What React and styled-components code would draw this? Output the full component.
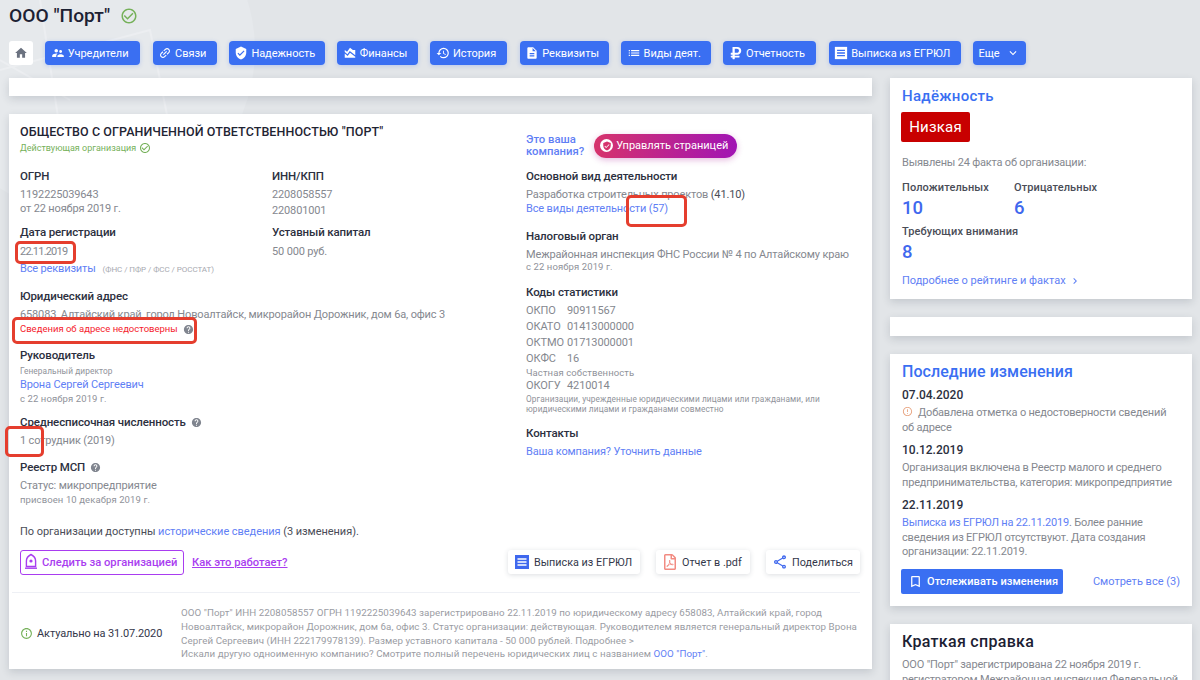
import styled, { createGlobalStyle } from "styled-components";
import {
  MdHome,
  MdSupervisorAccount,
  MdLink,
  MdVerifiedUser,
  MdAreaChart,
  MdHistory,
  MdDescription,
  MdList,
  MdExpandMore,
  MdCheckCircleOutline,
  MdHelp,
  MdInfoOutline,
  MdErrorOutline,
  MdChevronRight,
  MdBookmarkBorder,
  MdOutlineShare,
} from "react-icons/md";
import { FaRegFilePdf, FaRubleSign } from "react-icons/fa";

const GlobalStyle = createGlobalStyle`
  html, body {
    margin: 0;
    padding: 0;
    height: 680px;
    overflow: hidden;
    background: #e2e5e8;
    font-family: Roboto, "Liberation Sans", sans-serif;
  }
  * { box-sizing: border-box; }
`;

const Page = styled.div`
  position: relative;
  height: 680px;
  overflow: hidden;
  padding: 0 8px 0 9px;
`;

const Backdrop = styled.svg`
  position: absolute;
  left: 0;
  top: 0;
  width: 300px;
  height: 300px;
`;

const TitleRow = styled.div`
  position: relative;
  display: flex;
  align-items: center;
  gap: 10px;
  height: 41px;
  padding-bottom: 10px;
`;

const PageTitle = styled.h1`
  margin: 0;
  font-size: 19.2px;
  font-weight: 500;
  color: #1c2133;
`;

const Nav = styled.nav`
  position: relative;
  display: flex;
  height: 24px;
  gap: 12.3px;
`;

const HomeButton = styled.a`
  display: flex;
  align-items: center;
  justify-content: center;
  width: 24px;
  border-radius: 3px;
  background: #fff;
  color: #6b7280;
  font-size: 14px;
`;

const NavButton = styled.a`
  display: flex;
  align-items: center;
  justify-content: ${(p) => (p.$between ? "space-between" : "flex-start")};
  gap: 3px;
  width: ${(p) => p.$w}px;
  padding: 0 5.5px;
  border-radius: 4px;
  background: #3a6ff2;
  color: #fff;
  font-size: 11px;
  letter-spacing: -0.05px;
  white-space: nowrap;
  box-shadow: 0 1px 4px rgba(58, 111, 242, 0.25);
  svg { flex: none; width: 14px; height: 14px; }
`;

const TiltedLink = styled(MdLink)`
  transform: rotate(-45deg);
`;

const Columns = styled.div`
  position: relative;
  display: grid;
  grid-template-columns: 863px 302px;
  gap: 18px;
  margin-top: 13px;
`;

const Stack = styled.div`
  display: flex;
  flex-direction: column;
  gap: 18px;
`;

const Card = styled.section`
  background: #fff;
  box-shadow: 0 3px 8px rgba(40, 50, 70, 0.16);
`;

const Strip = styled(Card)`
  height: ${(p) => p.$h || 18}px;
`;

const MainCard = styled(Card)`
  position: relative;
  height: 555px;
  padding: 10px 12px 0 3px;
`;

const Mark = styled.div`
  position: absolute;
  left: ${(p) => p.$x}px;
  top: ${(p) => p.$y}px;
  width: ${(p) => p.$w}px;
  height: ${(p) => p.$h}px;
  border: 3px solid #e53e2e;
  border-radius: 5px;
`;

const Info = styled.div`
  display: grid;
  grid-template-columns: 506px 1fr;
  padding-left: 8px;
`;

const OrgName = styled.h2`
  margin: 0;
  font-size: 12.5px;
  line-height: 16px;
  font-weight: 500;
  color: #1f2433;
  letter-spacing: 0.08px;
  white-space: nowrap;
`;

const Status = styled.div`
  display: flex;
  align-items: center;
  gap: 3px;
  margin-top: 2px;
  font-size: 9px;
  line-height: 12px;
  color: #76b15a;
  svg { font-size: 12px; }
`;

const Pair = styled.div`
  display: grid;
  grid-template-columns: 252px 1fr;
`;

const Label = styled.div`
  display: flex;
  align-items: center;
  gap: 5px;
  margin-top: ${(p) => p.$mt || 0}px;
  font-size: 11.5px;
  line-height: 16px;
  font-weight: 500;
  color: #2c3040;
  letter-spacing: -0.13px;
  svg { color: #80858f; font-size: 11px; }
`;

const Value = styled.div`
  margin-top: ${(p) => p.$mt || 0}px;
  margin-bottom: -1px;
  padding-top: 1px;
  font-size: 11px;
  line-height: 14px;
  color: #85888f;
  letter-spacing: ${(p) => p.$ls || -0.15}px;
  white-space: nowrap;
`;

const Strong = styled.span`
  color: #4a4d57;
`;

const Small = styled.div`
  margin-top: ${(p) => p.$mt || 0}px;
  font-size: ${(p) => p.$size || 9.5}px;
  line-height: ${(p) => p.$lh || 12}px;
  color: #8f929a;
  letter-spacing: 0.1px;
  white-space: nowrap;
`;

const Link = styled.a`
  color: #5f80f5;
`;

const Note = styled.span`
  margin-left: 7px;
  font-size: 8px;
  letter-spacing: -0.05px;
  color: #a7a9b0;
`;

const Warning = styled.div`
  display: flex;
  align-items: center;
  gap: 5px;
  margin-top: 2px;
  font-size: 9.5px;
  line-height: 12px;
  color: #f5222d;
  svg { color: #80858f; font-size: 11px; }
`;

const History = styled.div`
  margin-top: 19px;
  font-size: 11px;
  line-height: 14px;
  color: #4a4d57;
  letter-spacing: -0.05px;
`;

const Promo = styled.div`
  display: flex;
  align-items: center;
  gap: 10px;
  height: 25px;
  margin-top: 9px;
`;

const PromoText = styled.a`
  font-size: 11.3px;
  line-height: 12px;
  font-weight: 500;
  color: #5f80f5;
`;

const PromoButton = styled.a`
  display: flex;
  align-items: center;
  gap: 2px;
  width: 143px;
  height: 24px;
  padding-left: 6px;
  border-radius: 12px;
  background: linear-gradient(90deg, #d6336c, #a114b4);
  color: #fff;
  font-size: 11px;
  white-space: nowrap;
  box-shadow: 0 2px 6px rgba(170, 30, 150, 0.3);
`;

const PromoIcon = styled.span`
  display: flex;
  align-items: center;
  justify-content: center;
  width: 13px;
  height: 13px;
  margin-right: 1px;
  border-radius: 50%;
  background: #fff;
  color: #d6336c;
  svg { font-size: 10px; }
`;

const Code = styled.div`
  display: grid;
  grid-template-columns: 41px 1fr;
  margin-top: ${(p) => p.$mt || 0}px;
  margin-bottom: -1px;
  padding-top: 1px;
  font-size: 11px;
  line-height: ${(p) => p.$lh || 16}px;
  color: #85888f;
  letter-spacing: -0.1px;
`;

const Actions = styled.div`
  display: flex;
  align-items: center;
  height: 24px;
  margin-top: 11px;
  padding-left: 8px;
`;

const WatchButton = styled.a`
  display: flex;
  align-items: center;
  gap: 3px;
  width: 164px;
  height: 25px;
  padding-left: 2px;
  border: 1.5px solid #a93df0;
  border-radius: 3px;
  color: #a93df0;
  font-size: 11.2px;
  font-weight: 500;
  white-space: nowrap;
`;

const HowLink = styled.a`
  margin-left: 8px;
  color: #a93df0;
  font-size: 11.2px;
  font-weight: 500;
  text-decoration: underline;
`;

const ActionGroup = styled.div`
  display: flex;
  gap: 16px;
  margin-left: auto;
`;

const ActionButton = styled.a`
  display: flex;
  align-items: center;
  gap: 4px;
  width: ${(p) => p.$w}px;
  height: 24px;
  padding-left: 6px;
  border-radius: 3px;
  background: #fff;
  color: #33374a;
  font-size: 10.8px;
  white-space: nowrap;
  box-shadow: 0 1px 5px rgba(40, 50, 70, 0.16);
  svg { flex: none; width: 16px; height: 16px; }
`;

const Footer = styled.footer`
  display: flex;
  margin-top: 18px;
  padding: 13px 0 0 8px;
  border-top: 1px solid #eef0f5;
`;

const Actual = styled.div`
  display: flex;
  flex: none;
  align-items: center;
  gap: 4px;
  width: 161px;
  font-size: 11px;
  letter-spacing: -0.1px;
  color: #33374a;
  svg { color: #76b15a; font-size: 13px; }
`;

const FooterText = styled.div`
  font-size: 9.75px;
  line-height: 13.8px;
  color: #9a9ca3;
  letter-spacing: 0.06px;
  white-space: nowrap;
`;

const SideCard = styled(Card)`
  padding: 9px 12px 0;
  height: ${(p) => p.$h}px;
`;

const SideTitle = styled.h3`
  margin: 0;
  font-size: ${(p) => p.$size || 15}px;
  line-height: 18px;
  font-weight: 500;
  letter-spacing: ${(p) => p.$ls || 0.3}px;
  color: ${(p) => (p.$dark ? "#1c2133" : "#3a6ff2")};
`;

const Badge = styled.div`
  display: inline-flex;
  align-items: center;
  justify-content: center;
  width: 69px;
  height: 30px;
  margin: 7px 0 0 -1px;
  border-radius: 2px;
  background: #c80000;
  color: #fff;
  font-size: 15px;
  letter-spacing: 0.2px;
`;

const SideText = styled.div`
  margin-top: ${(p) => p.$mt || 0}px;
  margin-bottom: -1px;
  padding-top: 1px;
  font-size: 11px;
  line-height: 14.5px;
  color: #85888f;
  letter-spacing: -0.2px;
  white-space: nowrap;
`;

const FactRow = styled.div`
  display: grid;
  grid-template-columns: 112px 1fr;
  row-gap: 1px;
  margin-top: ${(p) => p.$mt || 0}px;
`;

const FactLabel = styled.div`
  font-size: 11px;
  line-height: 14px;
  font-weight: 500;
  color: #4a4d57;
  letter-spacing: 0.1px;
  white-space: nowrap;
`;

const FactValue = styled.div`
  font-size: 18.5px;
  line-height: 24px;
  font-weight: 500;
  color: #3f68ee;
`;

const MoreLink = styled.a`
  display: flex;
  align-items: center;
  gap: 3px;
  margin-top: ${(p) => p.$mt || 0}px;
  font-size: 11px;
  line-height: 14px;
  color: #5f80f5;
  svg { font-size: 12px; }
`;

const DateLine = styled.div`
  margin-top: ${(p) => p.$mt || 0}px;
  font-size: 12px;
  line-height: 14px;
  font-weight: 500;
  color: #2c3040;
`;

const Alert = styled(MdErrorOutline)`
  margin-right: 5px;
  vertical-align: -1px;
  color: #e8a582;
  font-size: 11px;
`;

const Track = styled.div`
  display: flex;
  align-items: center;
  justify-content: space-between;
  margin-top: 10px;
`;

const TrackButton = styled.a`
  display: flex;
  align-items: center;
  gap: 4px;
  width: 162px;
  height: 25px;
  margin-left: -1px;
  padding-left: 7px;
  border-radius: 2px;
  background: #3a6ff2;
  color: #fff;
  font-size: 11px;
  font-weight: 500;
  letter-spacing: 0.1px;
  white-space: nowrap;
  svg { font-size: 15px; }
`;

const SeeAll = styled.a`
  font-size: 11px;
  color: #5f80f5;
`;

function SheetIcon({ size, fill, line }) {
  return (
    <svg width={size} height={size} viewBox="0 0 16 16">
      <rect x="1" y="1" width="14" height="14" fill={fill} />
      <path d="M3.5 5h9M3.5 8h9M3.5 11h9" stroke={line} strokeWidth="1.6" />
    </svg>
  );
}

function BellIcon() {
  return (
    <svg width="16" height="18" viewBox="0 0 16 18" fill="none" stroke="#a93df0" strokeWidth="1.4">
      <path d="M8 1.5 C11 3 12.6 5 12.6 8 V13.5 H3.4 V8 C3.4 5 5 3 8 1.5 Z" />
      <path d="M2 15.2 H14" />
      <circle cx="8" cy="8" r="1.6" fill="#a93df0" stroke="none" />
    </svg>
  );
}

const navItems = [
  { label: "Учредители", w: 95, icon: <MdSupervisorAccount /> },
  { label: "Связи", w: 64, icon: <TiltedLink /> },
  { label: "Надежность", w: 96, icon: <MdVerifiedUser /> },
  { label: "Финансы", w: 81, icon: <MdAreaChart /> },
  { label: "История", w: 77, icon: <MdHistory /> },
  { label: "Реквизиты", w: 89, icon: <MdDescription /> },
  { label: "Виды деят.", w: 90, icon: <MdList /> },
  { label: "Отчетность", w: 93, icon: <FaRubleSign /> },
  { label: "Выписка из ЕГРЮЛ", w: 132, icon: <SheetIcon size={14} fill="#fff" line="#3a6ff2" /> },
];

const codes = [
  ["ОКПО", "90911567"],
  ["ОКАТО", "01413000000"],
  ["ОКТМО", "01713000001"],
  ["ОКФС", "16"],
];

export default function App() {
  return (
    <Page>
      <GlobalStyle />
      <Backdrop viewBox="0 0 300 300">
        <circle cx="90" cy="50" r="165" fill="#e6e9ec" />
        <path d="M0 70 L150 30 L170 130 M40 0 L60 130 M0 60 L70 100" stroke="#eceef1" strokeWidth="2" fill="none" />
      </Backdrop>
      <TitleRow>
        <PageTitle>ООО "Порт"</PageTitle>
        <MdCheckCircleOutline color="#76b15a" size={18} />
      </TitleRow>
      <Nav>
        <HomeButton>
          <MdHome />
        </HomeButton>
        {navItems.map((item) => (
          <NavButton key={item.label} $w={item.w}>
            {item.icon}
            {item.label}
          </NavButton>
        ))}
        <NavButton $w={53} $between>
          Еще
          <MdExpandMore />
        </NavButton>
      </Nav>
      <Columns>
        <Stack>
          <Strip />
          <MainCard>
            <Info>
              <div>
                <OrgName>ОБЩЕСТВО С ОГРАНИЧЕННОЙ ОТВЕТСТВЕННОСТЬЮ "ПОРТ"</OrgName>
                <Status>
                  Действующая организация <MdCheckCircleOutline />
                </Status>
                <Pair>
                  <div>
                    <Label $mt={14}>ОГРН</Label>
                    <Value $mt={3}>1192225039643</Value>
                    <Value>от 22 ноября 2019 г.</Value>
                  </div>
                  <div>
                    <Label $mt={14}>ИНН/КПП</Label>
                    <Value $mt={3}>2208058557</Value>
                    <Value $mt={2}>220801001</Value>
                  </div>
                </Pair>
                <Pair>
                  <div>
                    <Label $mt={7}>Дата регистрации</Label>
                    <Value $mt={4} $ls={-0.8}>22.11.2019</Value>
                  </div>
                  <div>
                    <Label $mt={7}>Уставный капитал</Label>
                    <Value $mt={4}>50 000 руб.</Value>
                  </div>
                </Pair>
                <Value $mt={3}>
                  <Link>Все реквизиты</Link>
                  <Note>(ФНС / ПФР / ФСС / РОССТАТ)</Note>
                </Value>
                <Label $mt={12}>Юридический адрес</Label>
                <Value $mt={3}>658083, Алтайский край, город Новоалтайск, микрорайон Дорожник, дом 6а, офис 3</Value>
                <Warning>
                  Сведения об адресе недостоверны <MdHelp />
                </Warning>
                <Label $mt={12}>Руководитель</Label>
                <Small $mt={3} $lh={11} $size={8.3}>Генеральный директор</Small>
                <Value>
                  <Link>Врона Сергей Сергеевич</Link>
                </Value>
                <Small $mt={2}>с 22 ноября 2019 г.</Small>
                <Label $mt={9}>
                  Среднесписочная численность <MdHelp />
                </Label>
                <Value $mt={3}>1 сотрудник (2019)</Value>
                <Label $mt={12}>
                  Реестр МСП <MdHelp />
                </Label>
                <Value $mt={3}>Статус: микропредприятие</Value>
                <Small $mt={2}>присвоен 10 декабря 2019 г.</Small>
                <History>
                  По организации доступны <Link>исторические сведения</Link> (3 изменения).
                </History>
              </div>
              <div>
                <Promo>
                  <PromoText>
                    Это ваша
                    <br />
                    компания?
                  </PromoText>
                  <PromoButton>
                    <PromoIcon>
                      <MdVerifiedUser />
                    </PromoIcon>
                    Управлять страницей
                  </PromoButton>
                </Promo>
                <Label $mt={10}>Основной вид деятельности</Label>
                <Value $mt={3}>
                  Разработка строительных проектов <Strong>(41.10)</Strong>
                </Value>
                <Value>
                  <Link>Все виды деятельности (57)</Link>
                </Value>
                <Label $mt={13}>Налоговый орган</Label>
                <Value $mt={3}>Межрайонная инспекция ФНС России № 4 по Алтайскому краю</Value>
                <Small>с 22 ноября 2019 г.</Small>
                <Label $mt={11}>Коды статистики</Label>
                {codes.map(([name, code], i) => (
                  <Code key={name} $mt={i === 0 ? 2 : 0}>
                    <span>{name}</span>
                    <span>{code}</span>
                  </Code>
                ))}
                <Small $mt={1} $lh={11}>Частная собственность</Small>
                <Code $lh={14}>
                  <span>ОКОГУ</span>
                  <span>4210014</span>
                </Code>
                <Small $mt={2} $lh={10} $size={8.3}>
                  Организации, учрежденные юридическими лицами или гражданами, или
                  <br />
                  юридическими лицами и гражданами совместно
                </Small>
                <Label $mt={11}>Контакты</Label>
                <Value $mt={3}>
                  <Link>Ваша компания? Уточнить данные</Link>
                </Value>
              </div>
            </Info>
            <Actions>
              <WatchButton>
                <BellIcon />
                Следить за организацией
              </WatchButton>
              <HowLink>Как это работает?</HowLink>
              <ActionGroup>
                <ActionButton $w={132}>
                  <SheetIcon size={16} fill="#3f68ee" line="#fff" />
                  Выписка из ЕГРЮЛ
                </ActionButton>
                <ActionButton $w={94}>
                  <FaRegFilePdf color="#f28b82" />
                  Отчет в .pdf
                </ActionButton>
                <ActionButton $w={94}>
                  <MdOutlineShare color="#3f68ee" />
                  Поделиться
                </ActionButton>
              </ActionGroup>
            </Actions>
            <Footer>
              <Actual>
                <MdInfoOutline />
                Актуально на 31.07.2020
              </Actual>
              <FooterText>
                ООО "Порт" ИНН 2208058557 ОГРН 1192225039643 зарегистрировано 22.11.2019 по юридическому адресу 658083, Алтайский край, город
                <br />
                Новоалтайск, микрорайон Дорожник, дом 6а, офис 3. Статус организации: действующая. Руководителем является генеральный директор Врона
                <br />
                Сергей Сергеевич (ИНН 222179978139). Размер уставного капитала - 50 000 рублей. Подробнее &gt;
                <br />
                Искали другую одноименную компанию? Смотрите полный перечень юридических лиц с названием <Link>ООО "Порт"</Link>.
              </FooterText>
            </Footer>
            <Mark $x={6} $y={127} $w={61} $h={23} />
            <Mark $x={3} $y={203} $w={185} $h={27} />
            <Mark $x={617} $y={81} $w={61} $h={32} />
            <Mark $x={-4} $y={312} $w={39} $h={31} />
          </MainCard>
        </Stack>
        <Stack>
          <SideCard $h={221}>
            <SideTitle>Надёжность</SideTitle>
            <Badge>Низкая</Badge>
            <SideText $mt={13}>Выявлены 24 факта об организации:</SideText>
            <FactRow $mt={11}>
              <FactLabel>Положительных</FactLabel>
              <FactLabel>Отрицательных</FactLabel>
              <FactValue>10</FactValue>
              <FactValue>6</FactValue>
            </FactRow>
            <FactRow $mt={5}>
              <FactLabel>Требующих внимания</FactLabel>
              <span />
              <FactValue>8</FactValue>
            </FactRow>
            <MoreLink $mt={10}>
              Подробнее о рейтинге и фактах <MdChevronRight />
            </MoreLink>
          </SideCard>
          <Strip $h={19} />
          <SideCard $h={252}>
            <SideTitle $size={16} $ls={0.05}>Последние изменения</SideTitle>
            <DateLine $mt={7}>07.04.2020</DateLine>
            <SideText $mt={3}>
              <Alert />
              Добавлена отметка о недостоверности сведений
              <br />
              об адресе
            </SideText>
            <DateLine $mt={9}>10.12.2019</DateLine>
            <SideText $mt={3}>
              Организация включена в Реестр малого и среднего
              <br />
              предпринимательства, категория: микропредприятие
            </SideText>
            <DateLine $mt={9}>22.11.2019</DateLine>
            <SideText $mt={3}>
              <Link>Выписка из ЕГРЮЛ на 22.11.2019</Link>. Более ранние
              <br />
              сведения из ЕГРЮЛ отсутствуют. Дата создания
              <br />
              организации: 22.11.2019.
            </SideText>
            <Track>
              <TrackButton>
                <MdBookmarkBorder />
                Отслеживать изменения
              </TrackButton>
              <SeeAll>Смотреть все (3)</SeeAll>
            </Track>
          </SideCard>
          <SideCard $h={120}>
            <SideTitle $size={16} $dark>Краткая справка</SideTitle>
            <SideText $mt={6}>
              ООО "Порт" зарегистрирована 22 ноября 2019 г.
              <br />
              регистратором Межрайонная инспекция Федеральной
            </SideText>
          </SideCard>
        </Stack>
      </Columns>
    </Page>
  );
}
